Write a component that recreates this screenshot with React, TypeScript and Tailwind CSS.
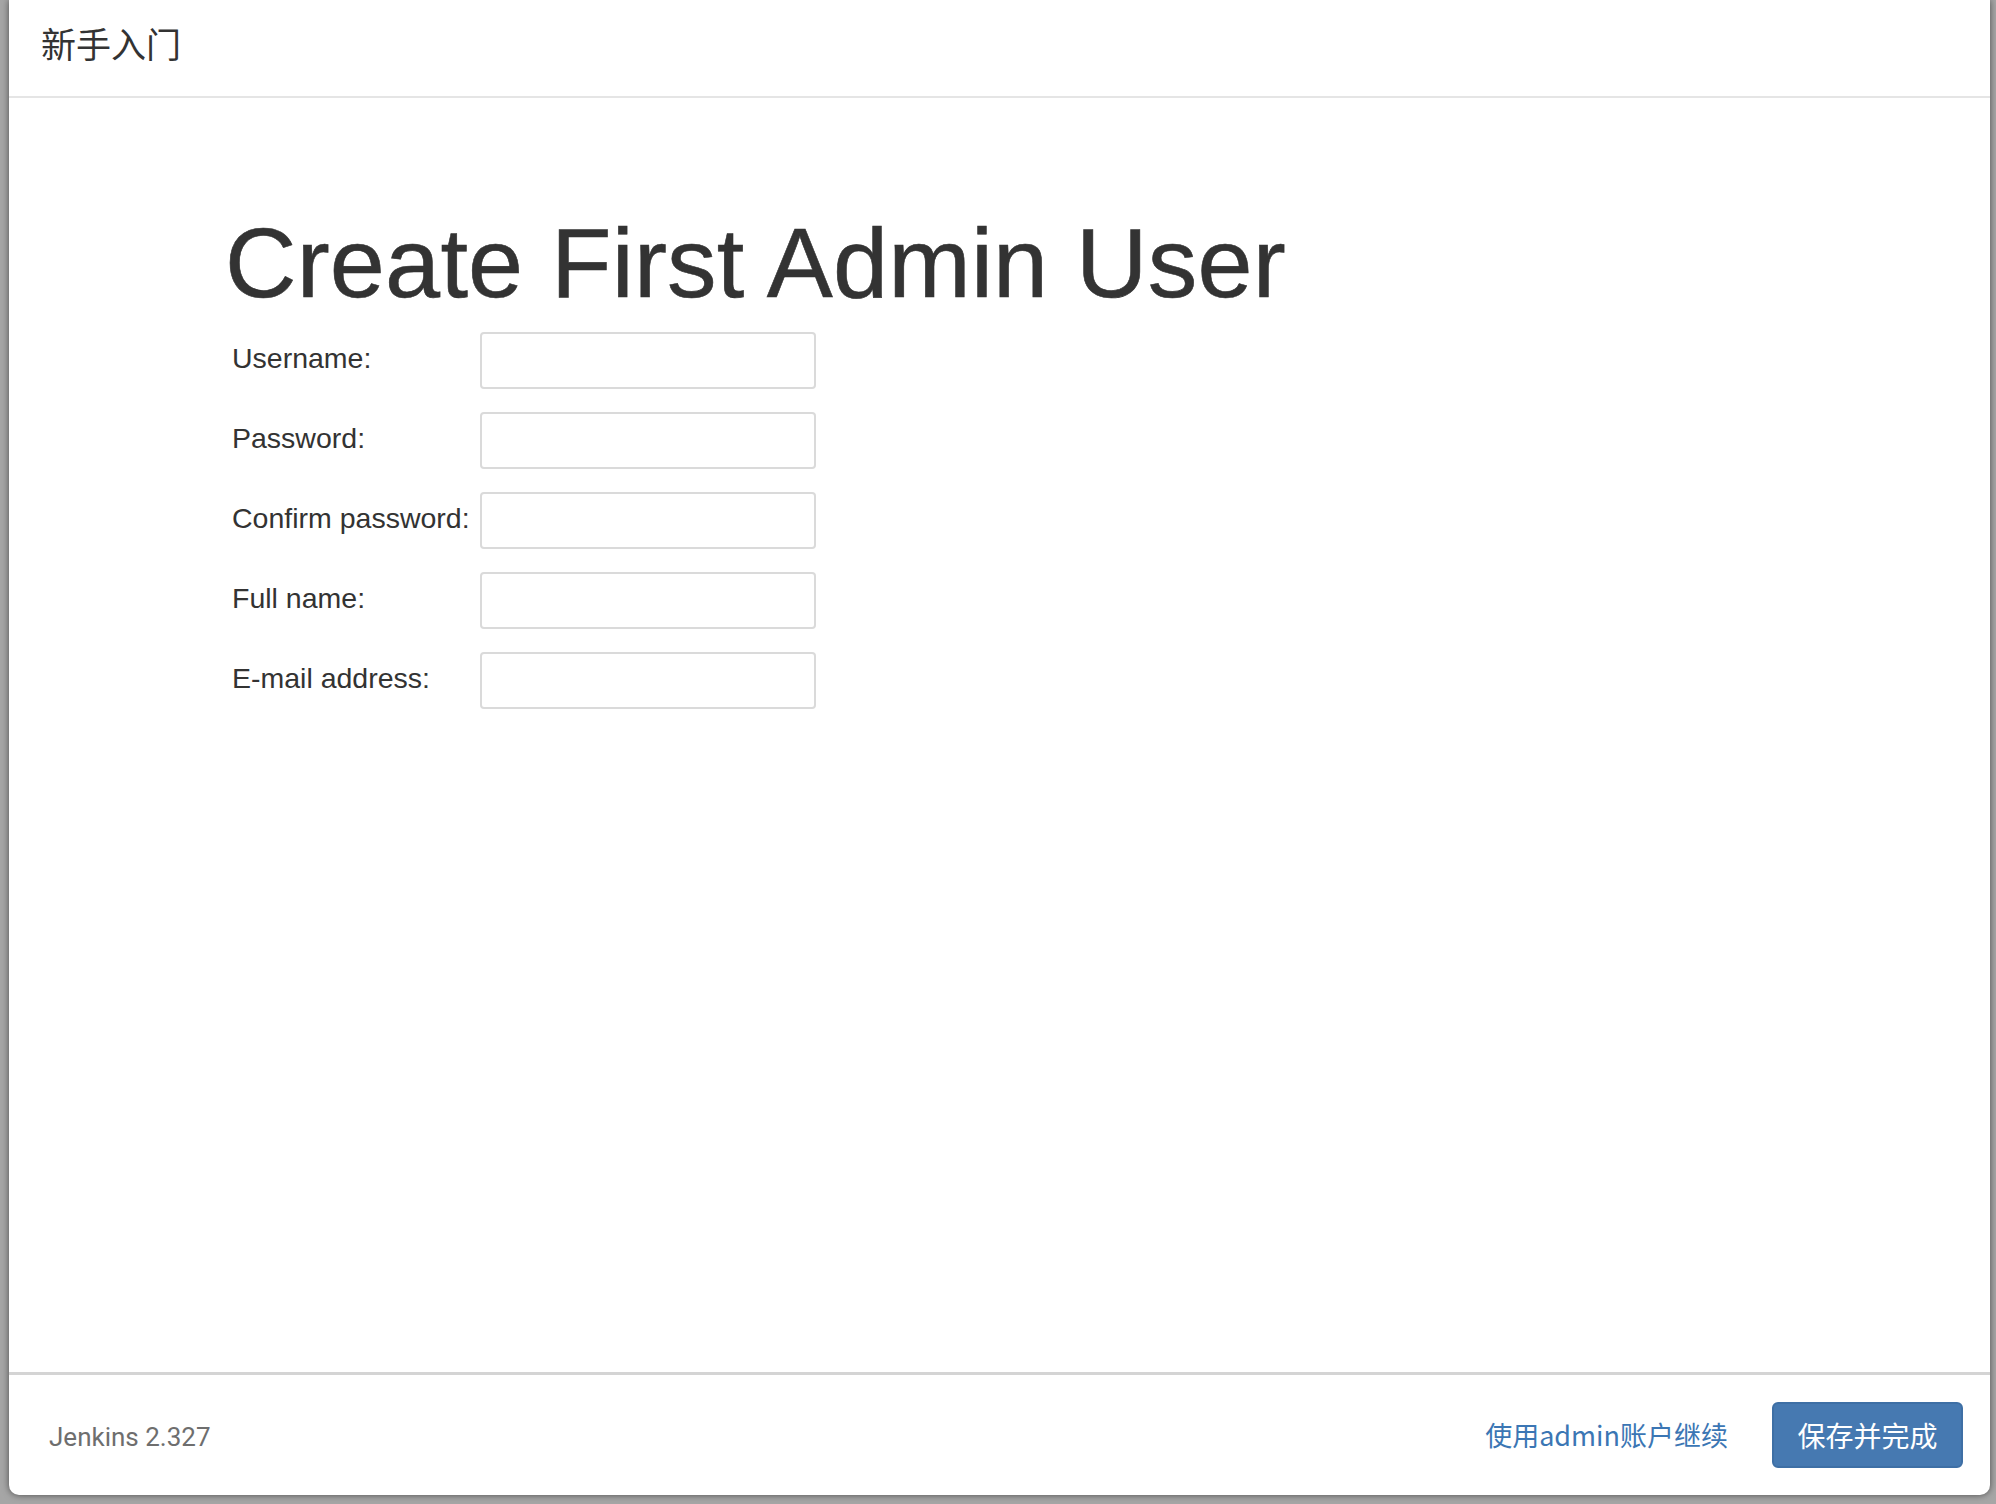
const fields = ['Username:', 'Password:', 'Confirm password:', 'Full name:', 'E-mail address:']

const FieldRow = ({ label }: { label: string }) => {
  return (
    <div className="flex items-start h-[56px]">
      <label className="w-[248px] shrink-0 pt-[6px] text-[28.5px] leading-[40px] text-[#333333] whitespace-nowrap">
        {label}
      </label>
      <input
        type={label.toLowerCase().includes('password') ? 'password' : 'text'}
        className="w-[336px] h-[57px] border-2 border-[#dadada] rounded-[4px] bg-white px-3 text-[27px] outline-none"
      />
    </div>
  )
}

export default function App() {
  return (
    <div className="w-full h-[1504px] bg-[#a6a6a6] flex pl-[9px] pr-[6px] pb-[9px] font-['Liberation_Sans','Noto_Sans_CJK_SC',sans-serif]">
      <div className="flex-1 flex flex-col bg-white rounded-b-[10px] shadow-[0_0_7px_rgba(0,0,0,0.55)]">
        <div className="h-[98px] shrink-0 flex items-center px-[32px] pb-[10px] border-b-2 border-[#e5e5e5]">
          <h4 className="text-[35px] leading-[44px] text-[#333333] font-['Noto_Sans_CJK_SC',sans-serif]">新手入门</h4>
        </div>

        <div className="flex-1 pl-[216px] pt-[110px]">
          <h1 className="text-[99px] leading-[110px] text-[#333333] tracking-[0.2px] [-webkit-text-stroke:0.6px_#333333]">
            Create First Admin User
          </h1>
          <div className="mt-[14px] pl-[7px] flex flex-col gap-[24px]">
            {fields.map((f) => (
              <FieldRow key={f} label={f} />
            ))}
          </div>
        </div>

        <div className="h-[123px] shrink-0 flex items-center border-t-[3px] border-[#d4d4d4] pl-[40px] pr-[27px]">
          <span className="pt-[5px] text-[26px] text-[#6e6e6e] font-['Roboto',sans-serif]">Jenkins 2.327</span>
          <div className="ml-auto flex items-center">
            <a className="mr-[44px] text-[27px] text-[#3b76b4] font-['Noto_Sans_CJK_SC',sans-serif] cursor-pointer">
              使用admin账户继续
            </a>
            <button
              type="button"
              className="w-[191px] h-[66px] rounded-[6px] bg-[#4679b1] border-2 border-[#3e6fa5] text-white text-[28px] font-['Noto_Sans_CJK_SC',sans-serif]"
            >
              保存并完成
            </button>
          </div>
        </div>
      </div>
    </div>
  )
}
